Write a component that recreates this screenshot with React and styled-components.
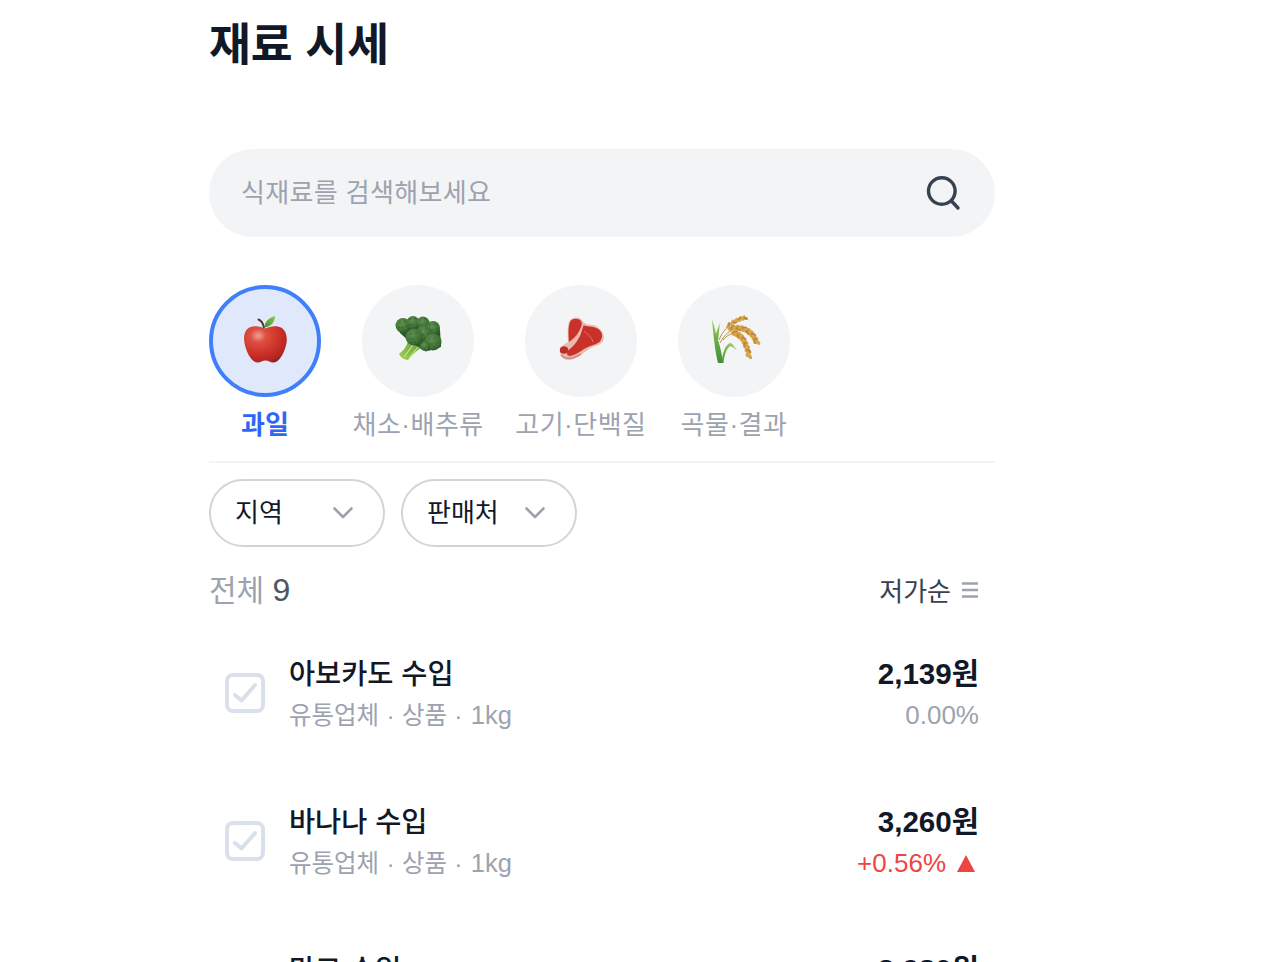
import React from "react";
import styled, { createGlobalStyle } from "styled-components";

const GlobalStyle = createGlobalStyle`
  html, body {
    margin: 0;
    padding: 0;
    height: 962px;
    overflow: hidden;
    background: #fff;
    font-family: "Liberation Sans", "Noto Sans CJK KR", sans-serif;
  }
`;

const Page = styled.div`
  width: 786px;
  margin-left: 209px;
`;

const Title = styled.h1`
  margin: 0 0 57px;
  font-size: 45.5px;
  line-height: 92px;
  font-weight: 700;
  color: #111827;
`;

const SearchBar = styled.div`
  height: 88px;
  display: flex;
  align-items: center;
  justify-content: space-between;
  padding: 0 32px;
  border-radius: 44px;
  background: #f3f4f6;
  box-sizing: border-box;
`;

const Placeholder = styled.span`
  margin-bottom: 6px;
  font-size: 26px;
  letter-spacing: 0.35px;
  color: #9ca3af;
`;

const Categories = styled.div`
  display: flex;
  gap: 31.5px;
  margin-top: 48px;
  padding-bottom: 18px;
  border-bottom: 2px solid #f3f4f6;
`;

const Category = styled.div`
  display: flex;
  flex-direction: column;
  align-items: center;
  min-width: 112px;
`;

const Circle = styled.div`
  width: 112px;
  height: 112px;
  display: flex;
  align-items: center;
  justify-content: center;
  box-sizing: border-box;
  border-radius: 50%;
  background: ${(p) => (p.$active ? "#dfe9fb" : "#f3f4f6")};
  border: ${(p) => (p.$active ? "4px solid #3f7ffa" : "none")};
`;

const CategoryLabel = styled.span`
  margin-top: 10px;
  font-size: 26px;
  line-height: 36px;
  white-space: nowrap;
  letter-spacing: ${(p) => (p.$active ? "0" : "0.5px")};
  font-weight: ${(p) => (p.$active ? 700 : 400)};
  color: ${(p) => (p.$active ? "#2f66f6" : "#9ca3af")};
`;

const Filters = styled.div`
  display: flex;
  gap: 16px;
  margin-top: 16px;
`;

const FilterButton = styled.div`
  width: 176px;
  height: 68px;
  display: flex;
  align-items: center;
  justify-content: space-between;
  box-sizing: border-box;
  padding: 0 30px 0 24px;
  border: 2px solid #d1d5db;
  border-radius: 34px;
  font-size: 26px;
  color: #111827;
`;

const FilterLabel = styled.span`
  margin-bottom: 6px;
`;

const CountRow = styled.div`
  height: 44px;
  margin-top: 21px;
  padding-right: 17px;
  display: flex;
  align-items: center;
  justify-content: space-between;
`;

const Count = styled.span`
  margin-bottom: 4px;
  font-size: 30px;
  color: #9ca3af;

  b {
    font-size: 32px;
    font-weight: 400;
    color: #4b5563;
  }
`;

const Sort = styled.span`
  display: flex;
  align-items: center;
  gap: 11px;
  font-size: 26px;
  color: #374151;
`;

const SortLabel = styled.span`
  margin-bottom: 2px;
`;

const ItemList = styled.div`
  margin-top: 7px;
`;

const Item = styled.div`
  height: 148px;
  display: flex;
  align-items: center;
  padding: 0 16px;
  box-sizing: border-box;
`;

const Info = styled.div`
  flex: 1;
  margin-left: 24px;
  padding-top: 4px;
`;

const Name = styled.div`
  margin-bottom: 1px;
  font-size: 28.4px;
  line-height: 38px;
  font-weight: 500;
  color: #111827;
`;

const Meta = styled.div`
  margin-top: 3px;
  font-size: 24.5px;
  line-height: 38px;
  word-spacing: 0.5px;
  color: #9ca3af;
  white-space: pre;
`;

const Weight = styled.span`
  margin-left: 1px;
  font-size: 25.5px;
`;

const PriceBox = styled.div`
  padding-top: 2px;
  text-align: right;
`;

const Price = styled.div`
  font-size: 29.6px;
  line-height: 40px;
  font-weight: 700;
  color: #111827;
`;

const Change = styled.div`
  margin-top: 2px;
  font-size: 26px;
  line-height: 38px;
  display: flex;
  align-items: center;
  justify-content: flex-end;
  color: ${(p) => (p.$up ? "#ef4444" : "#9ca3af")};
`;

const UpArrow = styled.i`
  width: 0;
  height: 0;
  margin: 0 4px 0 11px;
  border-left: 9.5px solid transparent;
  border-right: 9.5px solid transparent;
  border-bottom: 17px solid #ef4444;
`;

const SearchIcon = () => (
  <svg width="40" height="40" viewBox="0 0 40 40" fill="none" stroke="#374151" strokeWidth="3.4" strokeLinecap="round">
    <circle cx="18.8" cy="18" r="13.3" />
    <path d="M29 28.5 L35 35" />
  </svg>
);

const Chevron = () => (
  <svg width="20" height="12" viewBox="0 0 20 12" fill="none" stroke="#9ca3af" strokeWidth="2.6" strokeLinecap="round" strokeLinejoin="round">
    <path d="M1.5 1.5 L10 10 L18.5 1.5" />
  </svg>
);

const SortIcon = () => (
  <svg width="16" height="16" viewBox="0 0 16 16" stroke="#9ca3af" strokeWidth="2.4">
    <path d="M0 1.5H16M0 8H16M0 14.5H16" />
  </svg>
);

const CheckBox = () => (
  <svg width="40" height="40" viewBox="0 0 40 40" fill="none" stroke="#dadfec" strokeLinecap="round" strokeLinejoin="round">
    <rect x="2" y="2" width="36" height="36" rx="6" strokeWidth="4" />
    <path d="M10 22 L16.5 27.5 L30 12" strokeWidth="4" />
  </svg>
);

const AppleEmoji = () => (
  <svg width="60" height="60" viewBox="0 1 60 60">
    <defs>
      <radialGradient id="appleBody" cx="0.33" cy="0.26" r="0.85">
        <stop offset="0" stopColor="#efa091" />
        <stop offset="0.22" stopColor="#dd4f42" />
        <stop offset="0.55" stopColor="#cf332c" />
        <stop offset="0.85" stopColor="#b32522" />
        <stop offset="1" stopColor="#8a1c1a" />
      </radialGradient>
      <linearGradient id="appleLeaf" x1="1" y1="0" x2="0" y2="1">
        <stop offset="0" stopColor="#8ccb4c" />
        <stop offset="1" stopColor="#3d9433" />
      </linearGradient>
      <filter id="appleSoft">
        <feGaussianBlur stdDeviation="0.3" />
      </filter>
    </defs>
    <g filter="url(#appleSoft)">
      <path d="M30 18.5C26 16 18 15 13.5 18C9 21 8.5 28 9.5 33C11 41 15 50 21 52.3C25 53.5 27 50.5 30.5 50.5C34 50.5 36 53.5 40 52.3C46 50 50 41 51.5 33C52.5 27 51 21 47 18C42 15 35 16 30 18.5Z" fill="url(#appleBody)" />
      <path d="M23.5 9.5C26 10.5 28 13 29 17.5" fill="none" stroke="#5d3326" strokeWidth="1.9" strokeLinecap="round" />
      <path d="M29.5 17.5C29.5 12 34 7.5 40 6C40 12 36 16.5 29.5 17.5Z" fill="url(#appleLeaf)" />
    </g>
  </svg>
);

const florets = [
  [15, 15.5, 7.5],
  [25, 12.5, 6.5],
  [35, 13, 6.5],
  [45, 18, 7],
  [36, 23, 7.5],
  [26, 27, 8.5],
  [45, 32, 8.5],
  [37, 36, 5],
];

const specks = [
  [-3, -3],
  [2, -4],
  [4, 1],
  [-1, 2],
  [-4, 2],
  [1, 5],
];

const BroccoliEmoji = () => (
  <svg width="60" height="60" viewBox="0 1 60 60">
    <defs>
      <radialGradient id="floret" cx="0.4" cy="0.35" r="0.7">
        <stop offset="0" stopColor="#5f9150" />
        <stop offset="0.7" stopColor="#3f7136" />
        <stop offset="1" stopColor="#2a5327" />
      </radialGradient>
      <linearGradient id="stalk" x1="0" y1="1" x2="1" y2="0">
        <stop offset="0" stopColor="#a4d255" />
        <stop offset="1" stopColor="#5f9a3c" />
      </linearGradient>
      <filter id="broccoliSoft">
        <feGaussianBlur stdDeviation="0.35" />
      </filter>
    </defs>
    <g filter="url(#broccoliSoft)">
      <path d="M11 44C16 40 19 36 20 31L33 33L35 37C30 39 25 44 20 50C17 50 12 47 11 44Z" fill="url(#stalk)" />
      <path d="M16 47L25 35M21 48L30 37" stroke="#cbe588" strokeWidth="1.1" fill="none" />
      <path d="M10 15L36 8L52 20L53 37L40 41L24 34L12 23Z" fill="#2c5a29" />
      {florets.map(([cx, cy, r]) => (
        <g key={`${cx}-${cy}`}>
          <circle cx={cx} cy={cy} r={r} fill="url(#floret)" />
          {specks.map(([dx, dy]) => (
            <circle key={`${dx}-${dy}`} cx={cx + dx} cy={cy + dy} r="0.7" fill="#2e5c2a" />
          ))}
        </g>
      ))}
    </g>
  </svg>
);

const SteakEmoji = () => (
  <svg width="60" height="60" viewBox="0 1 60 60">
    <defs>
      <filter id="steakSoft">
        <feGaussianBlur stdDeviation="0.35" />
      </filter>
    </defs>
    <g filter="url(#steakSoft)">
      <path d="M18 12C20 7 28 6 31 10C33 14 37 15 42 15C47 16 53 22 53 27C53 32 49 35 44 36C38 38 36 41 31 44C26 48 21 50 17 50C12 50 8 45 9 40C10 36 14 34 17 32C17 26 16 18 18 12Z" fill="#ebb9ae" />
      <path d="M19 12C21 8 27 8 30 11C31 13 31 15 30 17C28 23 24 28 18 32C17.5 24 17 18 19 12Z" fill="#c8302a" />
      <path d="M32.5 15.5C38 16.5 44 16.5 48 19.5C52 23 52 28 48.5 32C44 35 38 36 33 39C29 42 24 45 19 46C16 46 15 43 17 40.5C22 37 26 32 29 26C30.5 22 31.5 19 32.5 15.5Z" fill="#c93029" />
      <ellipse cx="13" cy="40" rx="4.2" ry="3.8" fill="#bd2f2a" />
      <path d="M33 21C36 24 41 27 42 32" fill="none" stroke="#e37f73" strokeWidth="0.9" />
      <path d="M10 45C15 50 22 49 30 44" fill="none" stroke="#cf8e85" strokeWidth="1.6" />
    </g>
  </svg>
);

// grains laid along a quadratic curve, alternating on either side of the stem
const grainsAlong = ([x0, y0], [x1, y1], [x2, y2], count, size) =>
  Array.from({ length: count }, (_, i) => {
    const t = i / (count - 1);
    const u = 1 - t;
    const x = u * u * x0 + 2 * u * t * x1 + t * t * x2;
    const y = u * u * y0 + 2 * u * t * y1 + t * t * y2;
    const angle = (Math.atan2(2 * u * (y1 - y0) + 2 * t * (y2 - y1), 2 * u * (x1 - x0) + 2 * t * (x2 - x1)) * 180) / Math.PI;
    const side = i % 2 === 0 ? 1 : -1;
    return (
      <ellipse
        key={i}
        cx={x}
        cy={y}
        rx={size}
        ry={size * 0.62}
        fill={i % 3 === 1 ? "#bd8733" : "#d7a54c"}
        transform={`rotate(${angle + side * 24} ${x} ${y}) translate(0 ${side * 1})`}
      />
    );
  });

const RiceEmoji = () => (
  <svg width="60" height="60" viewBox="0 1 60 60">
    <defs>
      <linearGradient id="blade" x1="0" y1="0" x2="0" y2="1">
        <stop offset="0" stopColor="#9dc957" />
        <stop offset="1" stopColor="#3e8f35" />
      </linearGradient>
      <filter id="riceSoft">
        <feGaussianBlur stdDeviation="0.35" />
      </filter>
    </defs>
    <g filter="url(#riceSoft)">
      <path d="M8 9C9 22 11 42 14 53L19 53C18 44 16 36 14 30C15 24 15 18 16 13C14 17 13 21 12 24C11 19 9.5 14 8 9Z" fill="url(#blade)" />
      <path d="M18 53C18 44 21 35 26 33C28 33 30 36 32.5 40C29 36.5 27 35.5 25.5 36.5C22 40 20 46 19.5 53Z" fill="url(#blade)" />
      <g fill="none" stroke="#a98a3c" strokeWidth="0.9">
        <path d="M15 30C18 22 24 15 32 12" />
        <path d="M16 33C20 25 26 20 33 18" />
        <path d="M19 30C24 24 30 22 36 24" />
      </g>
      {grainsAlong([24, 16], [33, 9], [42, 7.5], 11, 2.3)}
      {grainsAlong([27, 18.5], [46, 15], [53, 33], 18, 3)}
      {grainsAlong([30, 23], [42, 26], [45, 47], 16, 3)}
    </g>
  </svg>
);

const categories = [
  { label: "과일", icon: <AppleEmoji />, active: true },
  { label: "채소·배추류", icon: <BroccoliEmoji /> },
  { label: "고기·단백질", icon: <SteakEmoji /> },
  { label: "곡물·결과", icon: <RiceEmoji /> },
];

const items = [
  { name: "아보카도 수입", price: "2,139원", change: "0.00%" },
  { name: "바나나 수입", price: "3,260원", change: "+0.56%", up: true },
  { name: "망고 수입", price: "3,980원", change: "0.00%" },
];

export default function App() {
  return (
    <Page>
      <GlobalStyle />
      <Title>재료 시세</Title>
      <SearchBar>
        <Placeholder>식재료를 검색해보세요</Placeholder>
        <SearchIcon />
      </SearchBar>
      <Categories>
        {categories.map((c) => (
          <Category key={c.label}>
            <Circle $active={c.active}>{c.icon}</Circle>
            <CategoryLabel $active={c.active}>{c.label}</CategoryLabel>
          </Category>
        ))}
      </Categories>
      <Filters>
        <FilterButton>
          <FilterLabel>지역</FilterLabel>
          <Chevron />
        </FilterButton>
        <FilterButton>
          <FilterLabel>판매처</FilterLabel>
          <Chevron />
        </FilterButton>
      </Filters>
      <CountRow>
        <Count>
          전체 <b>9</b>
        </Count>
        <Sort>
          <SortLabel>저가순</SortLabel>
          <SortIcon />
        </Sort>
      </CountRow>
      <ItemList>
        {items.map((item) => (
          <Item key={item.name}>
            <CheckBox />
            <Info>
              <Name>{item.name}</Name>
              <Meta>
                유통업체 · 상품 · <Weight>1kg</Weight>
              </Meta>
            </Info>
            <PriceBox>
              <Price>{item.price}</Price>
              <Change $up={item.up}>
                {item.change}
                {item.up && <UpArrow />}
              </Change>
            </PriceBox>
          </Item>
        ))}
      </ItemList>
    </Page>
  );
}
